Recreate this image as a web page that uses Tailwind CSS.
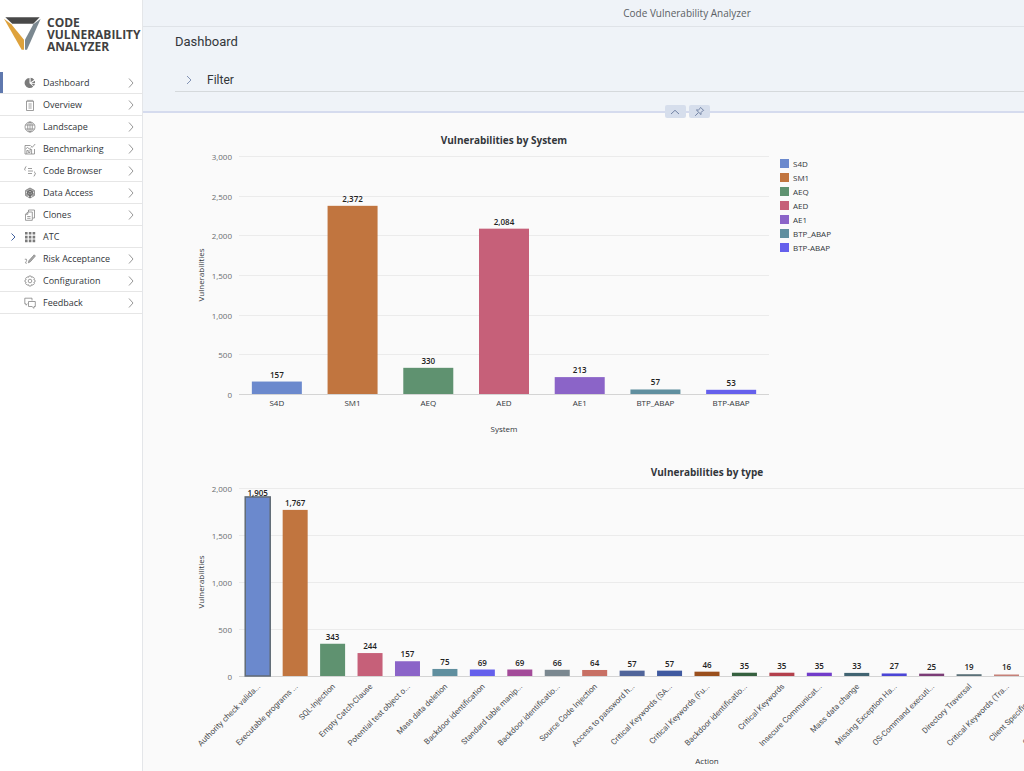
<!DOCTYPE html>
<html lang="en">
<head>
<meta charset="utf-8">
<title>Code Vulnerability Analyzer</title>
<script src="https://cdn.jsdelivr.net/npm/@tailwindcss/browser@4"></script>
</head>
<body class="bg-[#fafafa] font-['Open_Sans',sans-serif] text-[#32363a]">
<div class="flex min-h-screen overflow-hidden">
  <aside class="w-[143px] shrink-0 border-r border-[#e4e6e9] bg-white">
    <div class="flex h-[72px] items-start gap-1.5 pt-[17px] pl-1">
      <svg class="h-[34px] w-[37px] shrink-0" viewBox="11 54 111 102" aria-hidden="true">
        <path fill="#484848" d="M15 55H118L99 74H36Z"/>
        <path fill="#dea23c" d="M11 59L33 76L71 122V152H64Z"/>
        <path fill="#7b8890" d="M121 59L99 76L74 122V152H80Z"/>
        <path fill="#fff" d="M38 76H97L72 118Z"/>
      </svg>
      <div class="text-[12px] leading-3 font-bold text-[#414141]">CODE<br>VULNERABILITY<br>ANALYZER</div>
    </div>
    <nav id="nav" aria-label="Main"></nav>
  </aside>

  <main class="min-w-[1088px] flex-1">
    <header class="bg-[#eff3f8]">
      <div class="flex h-[27px] items-center justify-center border-b border-[#dfe3e8] text-[10px] text-[#5b5f64]">Code Vulnerability Analyzer</div>
      <div class="h-[86px] border-b-2 border-[#d5dbee] pl-8 font-[Roboto,sans-serif]">
        <h1 class="pt-1.5 text-[13px] leading-[18px]">Dashboard</h1>
        <button type="button" class="mt-4 flex h-[25px] w-full items-center gap-3 border-b border-[#d5d9dc] pt-0.5 pl-2 text-[12px]">
          <svg class="size-3" viewBox="0 0 12 12" fill="none" stroke="#8393b5" aria-hidden="true"><path d="M4 2L8 6L4 10"/></svg>
          <span>Filter</span>
        </button>
      </div>
    </header>
    <div class="relative z-10 -mt-2 flex justify-center gap-[3px]">
      <button type="button" aria-label="Collapse header" class="flex h-[13px] w-[21px] items-center justify-center rounded-xs bg-[#d6deec]">
        <svg class="h-2 w-3" viewBox="0 0 12 8" fill="none" stroke="#7384a5"><path d="M2 6L6 2.3L10 6"/></svg>
      </button>
      <button type="button" aria-label="Pin header" class="flex h-[13px] w-[21px] items-center justify-center rounded-xs bg-[#d6deec]">
        <svg class="size-[11px]" viewBox="0 0 11 11" fill="none" stroke="#7384a5"><path d="M6.6 1.4L9.6 4.4L8.6 4.9L7 6.6V8.6L2.4 4H4.4L6.1 2.4ZM4.4 6.6L1.2 9.8"/></svg>
      </button>
    </div>
    <section class="pt-1.5 pl-8">
      <svg id="by-system" class="block h-[332px] w-[1024px]" role="img" aria-label="Vulnerabilities by System"></svg>
      <svg id="by-type" class="block h-[315px] w-[1056px]" role="img" aria-label="Vulnerabilities by type"></svg>
    </section>
  </main>
</div>

<script>
const icons = {
  Dashboard: '<path fill="#7b7b7b" stroke="none" d="M5.5 1A5 5 0 1 0 9.3 9.4L5.5 6.2Z"/><path fill="#7b7b7b" stroke="none" d="M6.6 .8A5 5 0 0 1 10.2 2.8L6.6 5.2ZM10.8 3.7A5 5 0 0 1 11 6.2L7.4 5.9ZM10.9 7.1A5 5 0 0 1 9.9 9L7.3 6.7Z"/>',
  Overview: '<path d="M2.5 2H9.5V11.5H2.5ZM4.5 5H7.7M4.5 7H7.7M4.5 9H7.7M4 .8V3M6 .8V3M8 .8V3"/>',
  Landscape: '<circle cx="6" cy="6" r="5"/><ellipse cx="6" cy="6" rx="2.3" ry="5"/><path d="M1.6 4H10.4M1.6 8H10.4M6 1V11"/>',
  Benchmarking: '<path d="M6.5 2.5H1V11H10.5V6M2.8 11V7.5H4.3V9.5H6V6.5H7.6V11M1.5 6L3.5 4.5L5.5 6L7 4.5M7 2.8L8.3 4.3L11.2 1"/>',
  'Code Browser': '<path d="M2.4 1.5Q1.2 1.6 1.3 3Q1.3 4 .4 4.2Q1.3 4.5 1.3 5.5M4 3.5H8M4 6H9M4 8.5H8M10.2 6.5Q10.7 6.6 10.7 7.5Q10.7 8.5 11.6 8.7Q10.7 9 10.7 10Q10.7 11.2 9.6 11.2"/>',
  'Data Access': '<path fill="#aaa" stroke="#777" d="M6 1L10.4 3.4V8.6L6 11L1.6 8.6V3.4Z"/><path stroke="#555" d="M6 3.2L8.3 4.5V7.3L6 8.6L3.7 7.3V4.5ZM6 6V11M3.7 4.5L6 6L8.3 4.5"/><path stroke="#fff" d="M2 5L3 5.6M10 5L9 5.6M4 10L4.5 9M8 10L7.5 9"/>',
  Clones: '<path d="M4.5 3V1H10.5V9H8.5M3.8 3H8.3V11.3H1.5V5.3ZM3.8 3V5.3H1.5M3.2 7.5H6.5M3.2 9.3H6.5"/>',
  ATC: '<path fill="#7b7b7b" stroke="none" d="M1 1H3.6V3.6H1ZM4.8 1H7.4V3.6H4.8ZM8.6 1H11.2V3.6H8.6ZM1 4.8H3.6V7.4H1ZM4.8 4.8H7.4V7.4H4.8ZM8.6 4.8H11.2V7.4H8.6ZM1 8.6H3.6V11.2H1ZM4.8 8.6H7.4V11.2H4.8ZM8.6 8.6H11.2V11.2H8.6Z"/>',
  'Risk Acceptance': '<path d="M.8 6.3Q2.8 5.5 2.7 7.2Q2.6 8.3 1.6 9.2Q.9 10.4 2.8 10.3"/><path fill="#aaa" d="M4.3 9.8L5 7.6L10.2 1.8L11.4 3L6.3 8.8Z"/>',
  Configuration: '<path d="M4.9 1H7.1L7.5 2.3L9 1.9L10.4 3.3L9.8 4.6L11 5V7L9.8 7.4L10.4 8.7L9 10.1L7.5 9.7L7.1 11H4.9L4.5 9.7L3 10.1L1.6 8.7L2.2 7.4L1 7V5L2.2 4.6L1.6 3.3L3 1.9L4.5 2.3Z"/><circle cx="6" cy="6" r="1.8"/>',
  Feedback: '<path d="M3.5 6.8L2 8.2V6.8H.8V1.2H8V3.5M4.5 4.5H11.3V9.5H10V11.3L8 9.5H4.5Z"/>'
};
document.getElementById('nav').innerHTML = Object.keys(icons).map(name => {
  const lead = name === 'Dashboard' ? 'shadow-[inset_3px_0_0_#5f78ae]' : '';
  const expand = name === 'ATC' ? '<path d="M4.5 2.5L8 6L4.5 9.5"/>' : '';
  const next = name === 'ATC' ? '' : '<path d="M4 1.5L8 6L4 10.5"/>';
  return `<a href="#" class="flex h-[22px] items-center border-b border-b-[#e6e6e6] pr-[5px] pl-[7px] text-[9px] font-medium ${lead}">
    <svg class="mr-[5px] size-3" viewBox="0 0 12 12" fill="none" stroke="#42619f" aria-hidden="true">${expand}</svg>
    <svg class="mr-[7px] size-3" viewBox="0 0 12 12" fill="none" stroke="#858585" stroke-width=".8" aria-hidden="true">${icons[name]}</svg>
    <span class="flex-1">${name}</span>
    <svg class="size-3" viewBox="0 0 12 12" fill="none" stroke="#999" aria-hidden="true">${next}</svg>
  </a>`;
}).join('');

const fmt = n => n.toLocaleString('en-US');
function chart(id, o) {
  const left = 64, right = left + o.width, slot = o.width / o.data.length;
  const y = v => o.base - v / o.max * o.height;
  let s = `<text x="${left + o.width / 2}" y="${o.titleY}" text-anchor="middle" class="fill-[#32363a] text-[10px] font-bold">${o.title}</text>`;
  for (let v = 0; v <= o.max; v += 500) {
    const gy = Math.round(y(v)) + 0.5;
    s += `<path d="M${left} ${gy}H${right}" stroke="${v ? '#ebebeb' : '#d4d4d4'}"/>`;
    s += `<text x="57" y="${gy + 3}" text-anchor="end" class="fill-[#6a6d70] text-[8px]">${fmt(v)}</text>`;
  }
  const midY = o.base - o.height / 2;
  s += `<text transform="translate(29 ${midY}) rotate(-90)" text-anchor="middle" class="fill-[#32363a] text-[8px]">Vulnerabilities</text>`;
  o.data.forEach(([name, v, color], i) => {
    const cx = left + slot * (i + .5), top = y(v);
    const edge = o.selected === i;
    s += `<rect x="${cx - o.bar / 2}" y="${top}" width="${o.bar}" height="${o.base - top}" fill="${color}"${edge ? ' stroke="#606a75" stroke-width="1.5"' : ''}/>`;
    s += `<text x="${cx}" y="${top - (edge ? 1 : 4)}" text-anchor="middle" class="fill-[#222] text-[8px] font-semibold">${fmt(v)}</text>`;
    s += o.slanted
      ? `<text transform="translate(${cx + 3} ${o.base + 11}) rotate(-45)" text-anchor="end" class="fill-[#4a4d50] font-[Roboto,sans-serif] text-[8px]">${name}</text>`
      : `<text x="${cx}" y="${o.base + 12}" text-anchor="middle" class="fill-[#32363a] text-[8px]">${name}</text>`;
    if (o.legend) {
      s += `<rect x="605" y="${35 + i * 14}" width="9" height="9" fill="${color}"/>`;
      s += `<text x="618" y="${43 + i * 14}" class="fill-[#32363a] text-[8px]">${name}</text>`;
    }
  });
  s += `<text x="${left + o.width / 2}" y="${o.axisY}" text-anchor="middle" class="fill-[#32363a] text-[8px]">${o.axis}</text>`;
  document.getElementById(id).innerHTML = s;
}
chart('by-system', {
  title: 'Vulnerabilities by System', axis: 'System', titleY: 20, axisY: 308,
  width: 530, height: 238, base: 270, max: 3000, bar: 50, legend: true,
  data: [['S4D', 157, '#6b89cd'], ['SM1', 2372, '#c1753f'], ['AEQ', 330, '#5f9270'], ['AED', 2084, '#c66079'],
    ['AE1', 213, '#8b64c8'], ['BTP_ABAP', 57, '#608f9f'], ['BTP-ABAP', 53, '#6560ec']]
});
chart('by-type', {
  title: 'Vulnerabilities by type', axis: 'Action', titleY: 20, axisY: 308,
  width: 936, height: 188, base: 220, max: 2000, bar: 25, slanted: true, selected: 0,
  data: [['Authority check valida...', 1905, '#6b89cd'], ['Executable programs ...', 1767, '#c1753f'], ['SQL-Injection', 343, '#5f9270'],
    ['Empty Catch-Clause', 244, '#c66079'], ['Potential test object o...', 157, '#8b64c8'], ['Mass data deletion', 75, '#608f9f'],
    ['Backdoor identification', 69, '#6560ec'], ['Standard table manip...', 69, '#a34b99'], ['Backdoor identificatio...', 66, '#7b8890'],
    ['Source Code Injection', 64, '#c87064'], ['Access to password h...', 57, '#51659a'], ['Critical Keywords (SA...', 57, '#405aa0'],
    ['Critical Keywords (Fu...', 46, '#9a4f1d'], ['Backdoor identificatio...', 35, '#35603f'], ['Critical Keywords', 35, '#b3404c'],
    ['Insecure Communicat...', 35, '#723dca'], ['Mass data change', 33, '#416472'], ['Missing Exception Ha...', 27, '#4a45d6'],
    ['OS-Command executi...', 25, '#7b3c76'], ['Directory Traversal', 19, '#5a7078'], ['Critical Keywords (Tra...', 16, '#c58078'],
    ['Client Specific State...', 14, '#51659a'], ['Critical Keywords (Op...', 12, '#405aa0'], ['', 8, '#9a4f1d'], ['', 5, '#35603f']]
});
</script>
</body>
</html>
